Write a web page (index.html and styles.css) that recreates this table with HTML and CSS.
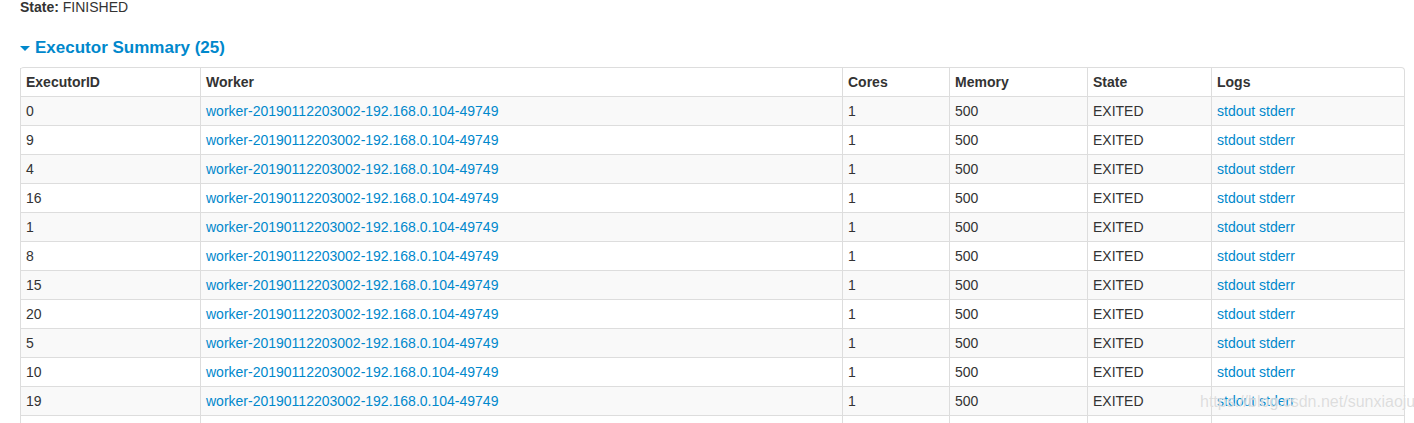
FILE: index.html
```html
<!DOCTYPE html>
<html>
<head>
<meta charset="utf-8">
<link rel="stylesheet" href="styles.css">
</head>
<body>
<div class="page">
  <div class="state"><strong>State:</strong> FINISHED</div>
  <h4 class="section-title"><span class="arrow"></span>Executor Summary (25)</h4>
  <table class="exec-table">
    <thead>
      <tr><th class="c1">ExecutorID</th><th class="c2">Worker</th><th class="c3">Cores</th><th class="c4">Memory</th><th class="c5">State</th><th class="c6">Logs</th></tr>
    </thead>
    <tbody>
      <tr><td>0</td><td><a>worker-20190112203002-192.168.0.104-49749</a></td><td>1</td><td>500</td><td>EXITED</td><td><a>stdout</a> <a>stderr</a></td></tr>
      <tr><td>9</td><td><a>worker-20190112203002-192.168.0.104-49749</a></td><td>1</td><td>500</td><td>EXITED</td><td><a>stdout</a> <a>stderr</a></td></tr>
      <tr><td>4</td><td><a>worker-20190112203002-192.168.0.104-49749</a></td><td>1</td><td>500</td><td>EXITED</td><td><a>stdout</a> <a>stderr</a></td></tr>
      <tr><td>16</td><td><a>worker-20190112203002-192.168.0.104-49749</a></td><td>1</td><td>500</td><td>EXITED</td><td><a>stdout</a> <a>stderr</a></td></tr>
      <tr><td>1</td><td><a>worker-20190112203002-192.168.0.104-49749</a></td><td>1</td><td>500</td><td>EXITED</td><td><a>stdout</a> <a>stderr</a></td></tr>
      <tr><td>8</td><td><a>worker-20190112203002-192.168.0.104-49749</a></td><td>1</td><td>500</td><td>EXITED</td><td><a>stdout</a> <a>stderr</a></td></tr>
      <tr><td>15</td><td><a>worker-20190112203002-192.168.0.104-49749</a></td><td>1</td><td>500</td><td>EXITED</td><td><a>stdout</a> <a>stderr</a></td></tr>
      <tr><td>20</td><td><a>worker-20190112203002-192.168.0.104-49749</a></td><td>1</td><td>500</td><td>EXITED</td><td><a>stdout</a> <a>stderr</a></td></tr>
      <tr><td>5</td><td><a>worker-20190112203002-192.168.0.104-49749</a></td><td>1</td><td>500</td><td>EXITED</td><td><a>stdout</a> <a>stderr</a></td></tr>
      <tr><td>10</td><td><a>worker-20190112203002-192.168.0.104-49749</a></td><td>1</td><td>500</td><td>EXITED</td><td><a>stdout</a> <a>stderr</a></td></tr>
      <tr><td>19</td><td><a>worker-20190112203002-192.168.0.104-49749</a></td><td>1</td><td>500</td><td>EXITED</td><td><a>stdout</a> <a>stderr</a></td></tr>
      <tr class="partial"><td>&nbsp;</td><td>&nbsp;</td><td>&nbsp;</td><td>&nbsp;</td><td>&nbsp;</td><td>&nbsp;</td></tr>
    </tbody>
  </table>
</div>
<div class="watermark">https://blog.csdn.net/sunxiaoju</div>
</body>
</html>
```
FILE: styles.css
```css
html, body {
  margin: 0;
  padding: 0;
  background: #fff;
  overflow: hidden;
}
body {
  font-family: "Liberation Sans", Arial, sans-serif;
  font-size: 14px;
  color: #333;
}
.page {
  padding: 0 9px 0 20px;
}
.state {
  font-size: 14px;
  line-height: 14px;
  color: #333;
}
.state strong {
  font-weight: bold;
}
.section-title {
  margin: 26px 0 0 0;
  font-size: 17px;
  line-height: 16px;
  font-weight: bold;
  color: #0088cc;
  display: flex;
  align-items: center;
  height: 16px;
}
.arrow {
  width: 0;
  height: 0;
  border-left: 5px solid transparent;
  border-right: 5px solid transparent;
  border-top: 5px solid #0088cc;
  margin-right: 5px;
  margin-top: 1px;
}
.exec-table {
  margin-top: 11px;
  width: 1385px;
  border-collapse: separate;
  border-spacing: 0;
  border: 1px solid #ddd;
  border-left: 0;
  border-radius: 4px;
  table-layout: fixed;
}
.exec-table th,
.exec-table td {
  padding: 4px 5px;
  line-height: 20px;
  text-align: left;
  vertical-align: top;
  border-left: 1px solid #ddd;
  border-top: 1px solid #ddd;
  white-space: nowrap;
  overflow: hidden;
}
.exec-table thead th {
  border-top: 0;
  font-weight: bold;
}
.exec-table tbody tr:nth-child(odd) td {
  background: #f9f9f9;
}
.exec-table tbody tr.partial td {
  background: #fff;
}
.exec-table a {
  color: #0088cc;
  text-decoration: none;
}
.c1 { width: 169px; }
.c2 { width: 631px; }
.c3 { width: 96px; }
.c4 { width: 127px; }
.c5 { width: 113px; }
.c6 { width: auto; }
.watermark {
  position: absolute;
  left: 1200px;
  top: 393px;
  font-size: 16px;
  color: rgba(210, 210, 210, 0.75);
  text-shadow: 0 0 1px rgba(255,255,255,0.9);
  white-space: nowrap;
}
```
